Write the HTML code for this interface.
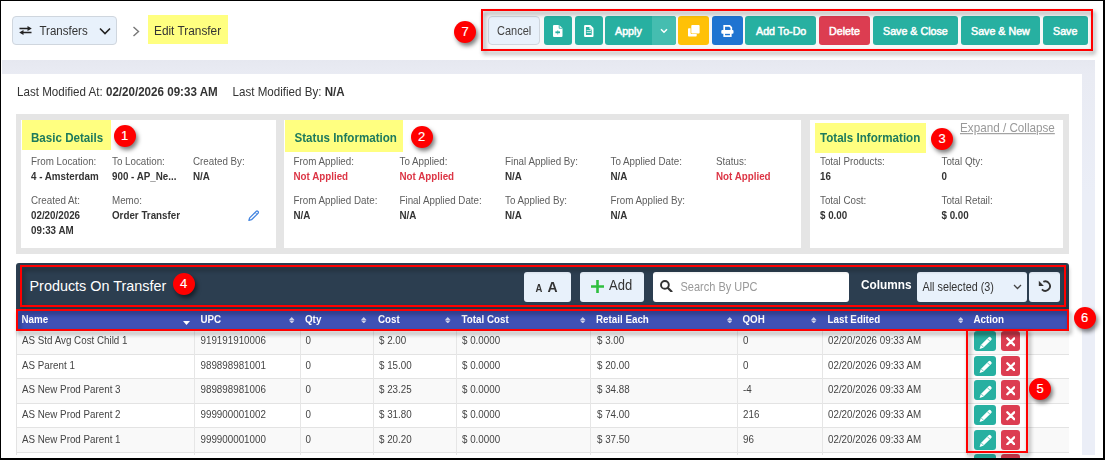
<!DOCTYPE html>
<html><head><meta charset="utf-8">
<style>
*{box-sizing:border-box;margin:0;padding:0}
html,body{width:1105px;height:460px;overflow:hidden;background:#fff;font-family:"Liberation Sans",sans-serif;color:#333}
.a{position:absolute}
.t,.ht{transform:scaleY(1.1);transform-origin:0 84.65%}
.lb,.vl,.td{transform:scaleY(1.04);transform-origin:0 84.65%}
.th{transform:scaleY(1.02);transform-origin:0 84.65%}
.t{position:absolute;white-space:nowrap;line-height:1}
#frame{position:absolute;left:0;top:0;width:1105px;height:460px;border-left:1px solid #000;border-top:1px solid #000;border-right:2px solid #000;border-bottom:2px solid #000;z-index:50;pointer-events:none}
.band{background:#eceef6}
.btnlb{background:#e8f1fb;border:1px solid #cfd6de;border-radius:4px}
.teal{background:#27b0a1;border-radius:3px}
.wt{color:#fff;font-size:10.7px;-webkit-text-stroke:0.5px #fff;transform:none}
.redbox{position:absolute;border:2px solid #f00;filter:drop-shadow(2px 3px 2px rgba(0,0,0,.45));z-index:20}
.badge{position:absolute;width:22px;height:22px;border-radius:50%;background:#f00;color:#fff;font-size:13px;line-height:22px;text-align:center;-webkit-text-stroke:0.15px #fff;box-shadow:2px 3px 4px rgba(0,0,0,.5);z-index:30}
.card{position:absolute;background:#fff;top:120px;height:128px}
.yl{position:absolute;background:#ffff80}
.ht{position:absolute;white-space:nowrap;line-height:1;font-size:11.6px;font-weight:bold;color:#1d7a5c}
.lb{position:absolute;white-space:nowrap;line-height:1;font-size:9.8px;color:#5e5e5e}
.vl{position:absolute;white-space:nowrap;line-height:1;font-size:9.8px;color:#333;font-weight:bold}
.red{color:#dc3545}
.th{position:absolute;white-space:nowrap;line-height:1;font-size:9.8px;color:#fff;font-weight:bold;top:314.6px}
.sort{position:absolute;top:316px;width:5px;height:9px}
.row{position:absolute;left:16px;width:1053px;height:24.6px;border-top:1px solid #e3e3e3}
.td{position:absolute;white-space:nowrap;line-height:1;font-size:9.8px;color:#444}
.vsep{position:absolute;width:1px;background:#e6e6e6;top:331px;height:124px}
</style></head><body>
<div id="frame"></div>

<!-- header -->
<div class="a btnlb" style="left:12px;top:16px;width:105px;height:29px"></div>
<svg class="a" style="left:19px;top:26px" width="13" height="9" viewBox="0 0 13 9"><path d="M0.5 2.5h9M12.5 6.5h-9" stroke="#222" stroke-width="1.7"/><path d="M8.5 0L12.8 2.5 8.5 5z M4.5 4L0.2 6.5 4.5 9z" fill="#222"/></svg>
<div class="t" style="left:39.5px;top:25.9px;font-size:11.5px;color:#333">Transfers</div>
<svg class="a" style="left:99px;top:27px" width="12" height="8" viewBox="0 0 12 8"><path d="M1 1.5l5 5 5-5" stroke="#222" stroke-width="1.6" fill="none"/></svg>
<svg class="a" style="left:132px;top:26px" width="9" height="11" viewBox="0 0 9 11"><path d="M1.5 1l5 4.5-5 4.5" stroke="#777" stroke-width="1.4" fill="none"/></svg>
<div class="yl" style="left:148px;top:15px;width:80px;height:29px"></div>
<div class="t" style="left:154px;top:26.2px;font-size:11.85px;color:#333">Edit Transfer</div>

<!-- toolbar -->
<div class="a" style="left:483px;top:11px;width:608px;height:38px;background:#f8f8f8"></div>
<div class="a btnlb" style="left:488px;top:16px;width:52px;height:29px"></div>
<div class="t" style="left:497px;top:26px;font-size:11px;color:#444">Cancel</div>
<div class="a teal" style="left:544px;top:16px;width:28px;height:29px"></div>
<svg class="a" style="left:552.8px;top:25px" width="10" height="12" viewBox="0 0 10 12"><path d="M0 1Q0 0 1 0H6.2L9.5 3.3V11Q9.5 12 8.5 12H1Q0 12 0 11Z" fill="#fff"/><path d="M6.2 0V3.3H9.5" fill="none" stroke="#27b0a1" stroke-width="0.8"/><path d="M2.4 7.3h4.6" stroke="#27b0a1" stroke-width="1.8"/><path d="M4.7 5.2v4.2" stroke="#27b0a1" stroke-width="1.1" opacity=".6"/></svg>
<div class="a teal" style="left:575px;top:16px;width:28px;height:29px"></div>
<svg class="a" style="left:583.8px;top:25px" width="10" height="12" viewBox="0 0 10 12"><path d="M1 1H6.1L8.6 3.5V11H1Z" fill="none" stroke="#fff" stroke-width="1.8" stroke-linejoin="round"/><path d="M2.6 5.6h4.4M2.6 7.6h4.4" stroke="#fff" stroke-width="1" opacity=".75"/><path d="M6 1.5v2.5h2.5" fill="none" stroke="#fff" stroke-width="1"/></svg>
<div class="a teal" style="left:605px;top:16px;width:71px;height:29px"></div>
<div class="a" style="left:652px;top:16px;width:24px;height:29px;background:#45bdb0;border-radius:0 3px 3px 0"></div>
<div class="t wt" style="left:615px;top:25.5px">Apply</div>
<svg class="a" style="left:660px;top:28px" width="8" height="6" viewBox="0 0 8 6"><path d="M1 1.2l3 3 3-3" stroke="#fff" stroke-width="1.5" fill="none"/></svg>
<div class="a" style="left:678px;top:16px;width:31px;height:29px;background:#ffc107;border-radius:3px"></div>
<svg class="a" style="left:688px;top:25px" width="12" height="12" viewBox="0 0 12 12"><rect x="0" y="3.3" width="8.7" height="8.2" rx="0.8" fill="#fff"/><rect x="2.6" y="-0.4" width="9.6" height="9.4" rx="1" fill="#ffc107"/><rect x="3.3" y="0.1" width="8.3" height="8.4" rx="0.8" fill="#fff"/></svg>
<div class="a" style="left:712px;top:16px;width:31px;height:29px;background:#1f74d1;border-radius:3px"></div>
<svg class="a" style="left:721px;top:25px" width="13" height="12" viewBox="0 0 13 12"><path d="M3.2 5.2V0.85H8.6L10.3 2.6V5.2" fill="none" stroke="#fff" stroke-width="1.7"/><rect x="0.3" y="5" width="12.2" height="3.8" rx="1" fill="#fff"/><rect x="3.2" y="8" width="6.6" height="3.1" fill="#1f74d1" stroke="#fff" stroke-width="1.7"/></svg>
<div class="a teal" style="left:745px;top:16px;width:71px;height:29px"></div>
<div class="t wt" style="left:756px;top:25.5px">Add To-Do</div>
<div class="a" style="left:819px;top:16px;width:51px;height:29px;background:#dc3d51;border-radius:3px"></div>
<div class="t wt" style="left:829px;top:25.5px">Delete</div>
<div class="a teal" style="left:873px;top:16px;width:85px;height:29px"></div>
<div class="t wt" style="left:883px;top:25.5px">Save &amp; Close</div>
<div class="a teal" style="left:961px;top:16px;width:79px;height:29px"></div>
<div class="t wt" style="left:971px;top:25.5px">Save &amp; New</div>
<div class="a teal" style="left:1043px;top:16px;width:45px;height:29px"></div>
<div class="t wt" style="left:1053px;top:25.5px">Save</div>
<div class="redbox" style="left:481px;top:9px;width:612px;height:42px"></div>
<div class="badge" style="left:454px;top:21px">7</div>

<!-- page background -->
<div class="a" style="left:2px;top:60px;width:1093px;height:13.5px;background:linear-gradient(#e6e8f0,#e9ebf3)"></div>
<div class="a" style="left:1082px;top:73.5px;width:13px;height:381.5px;background:linear-gradient(#e9ebf3,#ebeef7 120px)"></div>
<div class="a" style="left:1px;top:455px;width:1102px;height:3px;background:#fff"></div>

<!-- last modified -->
<div class="t" style="left:17px;top:86.2px;font-size:11.6px;color:#333">Last Modified At: <b>02/20/2026 09:33 AM</b></div>
<div class="t" style="left:232.5px;top:86.2px;font-size:11.6px;color:#333">Last Modified By: <b>N/A</b></div>

<!-- cards -->
<div class="a" style="left:16px;top:114px;width:1053px;height:140px;background:#e5e5e5"></div>
<div class="card" style="left:21px;width:255px"></div>
<div class="card" style="left:284px;width:517px"></div>
<div class="card" style="left:810px;width:253px"></div>

<div class="yl" style="left:22px;top:120px;width:89px;height:30px"></div>
<div class="ht" style="left:31px;top:132px">Basic Details</div>
<div class="badge" style="left:113.5px;top:125px">1</div>
<div class="lb" style="left:31px;top:157px">From Location:</div>
<div class="vl" style="left:31px;top:172px">4 - Amsterdam</div>
<div class="lb" style="left:112px;top:157px">To Location:</div>
<div class="vl" style="left:112px;top:172px">900 - AP_Ne...</div>
<div class="lb" style="left:193px;top:157px">Created By:</div>
<div class="vl" style="left:193px;top:172px">N/A</div>
<div class="lb" style="left:31px;top:196px">Created At:</div>
<div class="vl" style="left:31px;top:211px">02/20/2026</div>
<div class="vl" style="left:31px;top:226px">09:33 AM</div>
<div class="lb" style="left:112px;top:196px">Memo:</div>
<div class="vl" style="left:112px;top:211px">Order Transfer</div>
<svg class="a" style="left:247.5px;top:210px" width="11.5" height="11" viewBox="0 0 13.5 13"><path d="M1 12.3L1.9 9.3 9.8 1.5Q10.6 0.7 11.4 1.5L12 2.1Q12.8 2.9 12 3.7L4.1 11.5Z" fill="none" stroke="#4284e0" stroke-width="1.5" stroke-linejoin="round"/><path d="M8.4 2.9L10.6 5.1" stroke="#4284e0" stroke-width="1"/></svg>

<div class="yl" style="left:285px;top:120px;width:118px;height:32px"></div>
<div class="ht" style="left:294.5px;top:132px">Status Information</div>
<div class="badge" style="left:410.5px;top:126px">2</div>
<div class="lb" style="left:293.5px;top:157px">From Applied:</div>
<div class="vl red" style="left:293.5px;top:172px">Not Applied</div>
<div class="lb" style="left:399.5px;top:157px">To Applied:</div>
<div class="vl red" style="left:399.5px;top:172px">Not Applied</div>
<div class="lb" style="left:505px;top:157px">Final Applied By:</div>
<div class="vl" style="left:505px;top:172px">N/A</div>
<div class="lb" style="left:610.5px;top:157px">To Applied Date:</div>
<div class="vl" style="left:610.5px;top:172px">N/A</div>
<div class="lb" style="left:716px;top:157px">Status:</div>
<div class="vl red" style="left:716px;top:172px">Not Applied</div>
<div class="lb" style="left:293.5px;top:196px">From Applied Date:</div>
<div class="vl" style="left:293.5px;top:211px">N/A</div>
<div class="lb" style="left:399.5px;top:196px">Final Applied Date:</div>
<div class="vl" style="left:399.5px;top:211px">N/A</div>
<div class="lb" style="left:505px;top:196px">To Applied By:</div>
<div class="vl" style="left:505px;top:211px">N/A</div>
<div class="lb" style="left:610.5px;top:196px">From Applied By:</div>
<div class="vl" style="left:610.5px;top:211px">N/A</div>

<div class="yl" style="left:815px;top:123px;width:111px;height:30px"></div>
<div class="ht" style="left:820px;top:132px">Totals Information</div>
<div class="badge" style="left:931px;top:128px">3</div>
<div class="t" style="left:960px;top:121.5px;font-size:11.7px;color:#999;text-decoration:underline">Expand / Collapse</div>
<div class="lb" style="left:820px;top:157px">Total Products:</div>
<div class="vl" style="left:820px;top:172px">16</div>
<div class="lb" style="left:941.5px;top:157px">Total Qty:</div>
<div class="vl" style="left:941.5px;top:172px">0</div>
<div class="lb" style="left:820px;top:196px">Total Cost:</div>
<div class="vl" style="left:820px;top:211px">$ 0.00</div>
<div class="lb" style="left:941.5px;top:196px">Total Retail:</div>
<div class="vl" style="left:941.5px;top:211px">$ 0.00</div>

<!-- products header -->
<div class="a" style="left:16px;top:263px;width:1053px;height:47px;background:#2c3e50;border-radius:3px 3px 0 0"></div>
<div class="t" style="left:29.5px;top:279.3px;font-size:14.4px;color:#fff;transform:none">Products On Transfer</div>
<div class="badge" style="left:172.5px;top:273px">4</div>
<div class="a btnlb" style="left:524px;top:272px;width:47px;height:30px;border:none;border-radius:3px"></div>
<div class="t" style="left:535.5px;top:283.5px;font-size:9.5px;font-weight:bold;color:#333">A</div>
<div class="t" style="left:547.5px;top:280px;font-size:14px;font-weight:bold;color:#333">A</div>
<div class="a btnlb" style="left:580px;top:272px;width:64px;height:30px;border:none;border-radius:3px"></div>
<svg class="a" style="left:591px;top:279.5px" width="13" height="13" viewBox="0 0 13 13"><path d="M6.5 0v13M0 6.5h13" stroke="#2fbf3f" stroke-width="2.6"/></svg>
<div class="t" style="left:609px;top:278.5px;font-size:13px;color:#333">Add</div>
<div class="a" style="left:653px;top:272px;width:196px;height:30px;background:#fff;border-radius:3px"></div>
<svg class="a" style="left:659.5px;top:279.5px" width="13" height="12" viewBox="0 0 13 12"><circle cx="4.9" cy="4.9" r="3.9" fill="none" stroke="#333" stroke-width="1.9"/><path d="M7.7 7.7l3.8 3.8" stroke="#333" stroke-width="2.2" stroke-linecap="round"/></svg>
<div class="t" style="left:680.5px;top:281.5px;font-size:11px;color:#999">Search By UPC</div>
<div class="t" style="left:861px;top:280.3px;font-size:11.8px;font-weight:bold;color:#fff">Columns</div>
<div class="a btnlb" style="left:917px;top:272px;width:110px;height:30px;border:none;border-radius:3px"></div>
<div class="t" style="left:922.5px;top:282px;font-size:10.8px;color:#333">All selected (3)</div>
<svg class="a" style="left:1013px;top:284px" width="9" height="6" viewBox="0 0 9 6"><path d="M1 1l3.5 3.5L8 1" stroke="#444" stroke-width="1.3" fill="none"/></svg>
<div class="a btnlb" style="left:1029px;top:272px;width:31px;height:30px;border:none;border-radius:3px"></div>
<svg class="a" style="left:1038px;top:280px" width="13" height="13" viewBox="0 0 13 13"><path d="M5.3 1.8A4.7 4.7 0 1 1 3.9 9.4" fill="none" stroke="#333" stroke-width="1.8"/><path d="M0.8 0.8L5.9 5.9H0.8Z" fill="#333"/></svg>
<div class="redbox" style="left:19.5px;top:264.5px;width:1046px;height:42px"></div>

<!-- table header -->
<div class="a" style="left:16px;top:309px;width:1053px;height:21px;background:#3f51b5"></div>
<div class="th" style="left:21.5px">Name</div>
<div class="th" style="left:200.5px">UPC</div>
<div class="th" style="left:305px">Qty</div>
<div class="th" style="left:378px">Cost</div>
<div class="th" style="left:461.5px">Total Cost</div>
<div class="th" style="left:596px">Retail Each</div>
<div class="th" style="left:742.5px">QOH</div>
<div class="th" style="left:827.5px">Last Edited</div>
<div class="th" style="left:973.5px">Action</div>
<svg class="a" style="left:182.5px;top:321px" width="7" height="4" viewBox="0 0 7 4"><path d="M0 0h7L3.5 4z" fill="#fff"/></svg><svg class="a" style="left:289.15px;top:316.6px" width="5.5" height="6.5" viewBox="0 0 5.5 6.5"><path d="M2.75 0L5.5 3.1H0z M0 3.4h5.5L2.75 6.5z" fill="#cdd0e8"/></svg><svg class="a" style="left:361.25px;top:316.6px" width="5.5" height="6.5" viewBox="0 0 5.5 6.5"><path d="M2.75 0L5.5 3.1H0z M0 3.4h5.5L2.75 6.5z" fill="#cdd0e8"/></svg><svg class="a" style="left:445.25px;top:316.6px" width="5.5" height="6.5" viewBox="0 0 5.5 6.5"><path d="M2.75 0L5.5 3.1H0z M0 3.4h5.5L2.75 6.5z" fill="#cdd0e8"/></svg><svg class="a" style="left:580.25px;top:316.6px" width="5.5" height="6.5" viewBox="0 0 5.5 6.5"><path d="M2.75 0L5.5 3.1H0z M0 3.4h5.5L2.75 6.5z" fill="#cdd0e8"/></svg><svg class="a" style="left:726.95px;top:316.6px" width="5.5" height="6.5" viewBox="0 0 5.5 6.5"><path d="M2.75 0L5.5 3.1H0z M0 3.4h5.5L2.75 6.5z" fill="#cdd0e8"/></svg><svg class="a" style="left:811.05px;top:316.6px" width="5.5" height="6.5" viewBox="0 0 5.5 6.5"><path d="M2.75 0L5.5 3.1H0z M0 3.4h5.5L2.75 6.5z" fill="#cdd0e8"/></svg><svg class="a" style="left:957.75px;top:316.6px" width="5.5" height="6.5" viewBox="0 0 5.5 6.5"><path d="M2.75 0L5.5 3.1H0z M0 3.4h5.5L2.75 6.5z" fill="#cdd0e8"/></svg>
<div class="redbox" style="left:16px;top:309px;width:1053px;height:22px"></div>
<div class="badge" style="left:1073.5px;top:307px">6</div>

<!-- table body -->
<div id="tbody"><div class="row" style="top:329.0px;background:#f9f9f9"></div>
<div class="row" style="top:353.6px;background:#fff"></div>
<div class="row" style="top:378.2px;background:#f9f9f9"></div>
<div class="row" style="top:402.8px;background:#fff"></div>
<div class="row" style="top:427.4px;background:#f9f9f9"></div>
<div class="row" style="top:452.0px;background:#fff"></div>
<div class="vsep" style="left:194px"></div>
<div class="vsep" style="left:299.5px"></div>
<div class="vsep" style="left:372.5px"></div>
<div class="vsep" style="left:456px"></div>
<div class="vsep" style="left:590px"></div>
<div class="vsep" style="left:736.5px"></div>
<div class="vsep" style="left:821.5px"></div>
<div class="vsep" style="left:967px"></div>
<div class="td" style="left:22px;top:336.2px">AS Std Avg Cost Child 1</div>
<div class="td" style="left:200.5px;top:336.2px">919191910006</div>
<div class="td" style="left:305.5px;top:336.2px">0</div>
<div class="td" style="left:379px;top:336.2px">$ 2.00</div>
<div class="td" style="left:462px;top:336.2px">$ 0.0000</div>
<div class="td" style="left:597px;top:336.2px">$ 3.00</div>
<div class="td" style="left:743px;top:336.2px">0</div>
<div class="td" style="left:828px;top:336.2px">02/20/2026 09:33 AM</div>
<div class="a" style="left:974px;top:331.2px;width:22px;height:20px;background:#27b0a1;border-radius:3px"></div>
<svg class="a" style="left:978.5px;top:335.6px" width="13.5" height="13" viewBox="0 0 13.5 13"><path d="M0.6 12.9L1.7 9.2 9.6 1.3Q10.6 0.3 11.6 1.3L12.2 1.9Q13.2 2.9 12.2 3.9L4.3 11.8Z" fill="#fff"/><path d="M8.3 2.6L10.9 5.2M2.2 8.9L4.6 11.3" stroke="#27b0a1" stroke-width="0.7"/></svg>
<div class="a" style="left:1001px;top:331.2px;width:19px;height:20px;background:#dc3d51;border-radius:3px"></div>
<svg class="a" style="left:1005.8px;top:337.2px" width="9.5" height="9.5" viewBox="0 0 9.5 9.5"><path d="M1.3 1.3l6.9 6.9M8.2 1.3l-6.9 6.9" stroke="#fff" stroke-width="2.3" stroke-linecap="round"/></svg>
<div class="td" style="left:22px;top:360.8px">AS Parent 1</div>
<div class="td" style="left:200.5px;top:360.8px">989898981001</div>
<div class="td" style="left:305.5px;top:360.8px">0</div>
<div class="td" style="left:379px;top:360.8px">$ 15.00</div>
<div class="td" style="left:462px;top:360.8px">$ 0.0000</div>
<div class="td" style="left:597px;top:360.8px">$ 20.00</div>
<div class="td" style="left:743px;top:360.8px">0</div>
<div class="td" style="left:828px;top:360.8px">02/20/2026 09:33 AM</div>
<div class="a" style="left:974px;top:355.8px;width:22px;height:20px;background:#27b0a1;border-radius:3px"></div>
<svg class="a" style="left:978.5px;top:360.2px" width="13.5" height="13" viewBox="0 0 13.5 13"><path d="M0.6 12.9L1.7 9.2 9.6 1.3Q10.6 0.3 11.6 1.3L12.2 1.9Q13.2 2.9 12.2 3.9L4.3 11.8Z" fill="#fff"/><path d="M8.3 2.6L10.9 5.2M2.2 8.9L4.6 11.3" stroke="#27b0a1" stroke-width="0.7"/></svg>
<div class="a" style="left:1001px;top:355.8px;width:19px;height:20px;background:#dc3d51;border-radius:3px"></div>
<svg class="a" style="left:1005.8px;top:361.8px" width="9.5" height="9.5" viewBox="0 0 9.5 9.5"><path d="M1.3 1.3l6.9 6.9M8.2 1.3l-6.9 6.9" stroke="#fff" stroke-width="2.3" stroke-linecap="round"/></svg>
<div class="td" style="left:22px;top:385.4px">AS New Prod Parent 3</div>
<div class="td" style="left:200.5px;top:385.4px">989898981006</div>
<div class="td" style="left:305.5px;top:385.4px">0</div>
<div class="td" style="left:379px;top:385.4px">$ 23.25</div>
<div class="td" style="left:462px;top:385.4px">$ 0.0000</div>
<div class="td" style="left:597px;top:385.4px">$ 34.88</div>
<div class="td" style="left:743px;top:385.4px">-4</div>
<div class="td" style="left:828px;top:385.4px">02/20/2026 09:33 AM</div>
<div class="a" style="left:974px;top:380.4px;width:22px;height:20px;background:#27b0a1;border-radius:3px"></div>
<svg class="a" style="left:978.5px;top:384.8px" width="13.5" height="13" viewBox="0 0 13.5 13"><path d="M0.6 12.9L1.7 9.2 9.6 1.3Q10.6 0.3 11.6 1.3L12.2 1.9Q13.2 2.9 12.2 3.9L4.3 11.8Z" fill="#fff"/><path d="M8.3 2.6L10.9 5.2M2.2 8.9L4.6 11.3" stroke="#27b0a1" stroke-width="0.7"/></svg>
<div class="a" style="left:1001px;top:380.4px;width:19px;height:20px;background:#dc3d51;border-radius:3px"></div>
<svg class="a" style="left:1005.8px;top:386.4px" width="9.5" height="9.5" viewBox="0 0 9.5 9.5"><path d="M1.3 1.3l6.9 6.9M8.2 1.3l-6.9 6.9" stroke="#fff" stroke-width="2.3" stroke-linecap="round"/></svg>
<div class="td" style="left:22px;top:410.0px">AS New Prod Parent 2</div>
<div class="td" style="left:200.5px;top:410.0px">999900001002</div>
<div class="td" style="left:305.5px;top:410.0px">0</div>
<div class="td" style="left:379px;top:410.0px">$ 31.80</div>
<div class="td" style="left:462px;top:410.0px">$ 0.0000</div>
<div class="td" style="left:597px;top:410.0px">$ 74.00</div>
<div class="td" style="left:743px;top:410.0px">216</div>
<div class="td" style="left:828px;top:410.0px">02/20/2026 09:33 AM</div>
<div class="a" style="left:974px;top:405.0px;width:22px;height:20px;background:#27b0a1;border-radius:3px"></div>
<svg class="a" style="left:978.5px;top:409.4px" width="13.5" height="13" viewBox="0 0 13.5 13"><path d="M0.6 12.9L1.7 9.2 9.6 1.3Q10.6 0.3 11.6 1.3L12.2 1.9Q13.2 2.9 12.2 3.9L4.3 11.8Z" fill="#fff"/><path d="M8.3 2.6L10.9 5.2M2.2 8.9L4.6 11.3" stroke="#27b0a1" stroke-width="0.7"/></svg>
<div class="a" style="left:1001px;top:405.0px;width:19px;height:20px;background:#dc3d51;border-radius:3px"></div>
<svg class="a" style="left:1005.8px;top:411.0px" width="9.5" height="9.5" viewBox="0 0 9.5 9.5"><path d="M1.3 1.3l6.9 6.9M8.2 1.3l-6.9 6.9" stroke="#fff" stroke-width="2.3" stroke-linecap="round"/></svg>
<div class="td" style="left:22px;top:434.6px">AS New Prod Parent 1</div>
<div class="td" style="left:200.5px;top:434.6px">999900001000</div>
<div class="td" style="left:305.5px;top:434.6px">0</div>
<div class="td" style="left:379px;top:434.6px">$ 20.20</div>
<div class="td" style="left:462px;top:434.6px">$ 0.0000</div>
<div class="td" style="left:597px;top:434.6px">$ 37.50</div>
<div class="td" style="left:743px;top:434.6px">96</div>
<div class="td" style="left:828px;top:434.6px">02/20/2026 09:33 AM</div>
<div class="a" style="left:974px;top:429.6px;width:22px;height:20px;background:#27b0a1;border-radius:3px"></div>
<svg class="a" style="left:978.5px;top:434.0px" width="13.5" height="13" viewBox="0 0 13.5 13"><path d="M0.6 12.9L1.7 9.2 9.6 1.3Q10.6 0.3 11.6 1.3L12.2 1.9Q13.2 2.9 12.2 3.9L4.3 11.8Z" fill="#fff"/><path d="M8.3 2.6L10.9 5.2M2.2 8.9L4.6 11.3" stroke="#27b0a1" stroke-width="0.7"/></svg>
<div class="a" style="left:1001px;top:429.6px;width:19px;height:20px;background:#dc3d51;border-radius:3px"></div>
<svg class="a" style="left:1005.8px;top:435.6px" width="9.5" height="9.5" viewBox="0 0 9.5 9.5"><path d="M1.3 1.3l6.9 6.9M8.2 1.3l-6.9 6.9" stroke="#fff" stroke-width="2.3" stroke-linecap="round"/></svg>
<div class="a" style="left:974px;top:454.2px;width:22px;height:20px;background:#27b0a1;border-radius:3px"></div>
<svg class="a" style="left:978.5px;top:458.6px" width="13.5" height="13" viewBox="0 0 13.5 13"><path d="M0.6 12.9L1.7 9.2 9.6 1.3Q10.6 0.3 11.6 1.3L12.2 1.9Q13.2 2.9 12.2 3.9L4.3 11.8Z" fill="#fff"/><path d="M8.3 2.6L10.9 5.2M2.2 8.9L4.6 11.3" stroke="#27b0a1" stroke-width="0.7"/></svg>
<div class="a" style="left:1001px;top:454.2px;width:19px;height:20px;background:#dc3d51;border-radius:3px"></div>
<svg class="a" style="left:1005.8px;top:460.2px" width="9.5" height="9.5" viewBox="0 0 9.5 9.5"><path d="M1.3 1.3l6.9 6.9M8.2 1.3l-6.9 6.9" stroke="#fff" stroke-width="2.3" stroke-linecap="round"/></svg>
<div class="redbox" style="left:966px;top:329px;width:62px;height:124px"></div>
<div class="badge" style="left:1029px;top:378px">5</div></div>
<div class="a" style="left:16px;top:331px;width:1053px;height:124px;border-left:1px solid #e3e3e3"></div>
</body></html>
